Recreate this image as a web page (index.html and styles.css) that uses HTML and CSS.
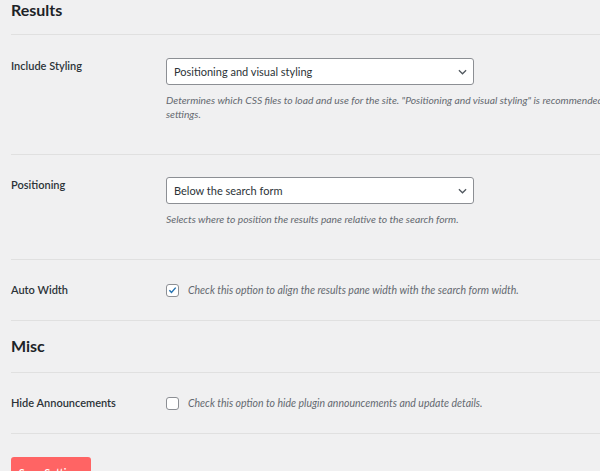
FILE: index.html
```html
<!DOCTYPE html>
<html lang="en">
<head>
<meta charset="utf-8">
<title>Settings</title>
<link rel="stylesheet" href="styles.css">
</head>
<body>
<div class="page">
  <h2 class="section-head first">Results</h2>

  <div class="row">
    <div class="label">Include Styling</div>
    <div class="field">
      <div class="select"><span>Positioning and visual styling</span>
        <svg class="chev" viewBox="0 0 10 6" width="9" height="6"><path d="M1 1l4 4 4-4" fill="none" stroke="#50575e" stroke-width="1.4"/></svg>
      </div>
      <p class="desc wide">Determines which CSS files to load and use for the site. "Positioning and visual styling" is recommended for most settings.</p>
    </div>
  </div>

  <div class="row">
    <div class="label">Positioning</div>
    <div class="field">
      <div class="select"><span>Below the search form</span>
        <svg class="chev" viewBox="0 0 10 6" width="9" height="6"><path d="M1 1l4 4 4-4" fill="none" stroke="#50575e" stroke-width="1.4"/></svg>
      </div>
      <p class="desc">Selects where to position the results pane relative to the search form.</p>
    </div>
  </div>

  <div class="row check-row">
    <div class="label">Auto Width</div>
    <div class="field inline">
      <span class="checkbox checked"><svg viewBox="0 0 12 12" width="12" height="12"><path d="M2.6 6.2l2.3 2.4 4.6-5.2" fill="none" stroke="#2271b1" stroke-width="1.6"/></svg></span>
      <span class="desc">Check this option to align the results pane width with the search form width.</span>
    </div>
  </div>

  <h2 class="section-head">Misc</h2>

  <div class="row check-row">
    <div class="label">Hide Announcements</div>
    <div class="field inline">
      <span class="checkbox"></span>
      <span class="desc">Check this option to hide plugin announcements and update details.</span>
    </div>
  </div>

  <div class="actions">
    <button class="save" type="button">Save Settings</button>
  </div>
</div>
</body>
</html>
```

FILE: styles.css
```css
html, body {
  margin: 0;
  padding: 0;
  background: #f0f0f1;
  overflow: hidden;
}

body {
  font-family: Lato, "Open Sans", sans-serif;
  color: #1d2327;
}

.page {
  padding-left: 11px;
  width: 720px;
}

.section-head {
  margin: 0;
  font-size: 16px;
  font-weight: 700;
  line-height: 20px;
  padding: 15px 0 16px;
  border-bottom: 1px solid #e0e0e0;
  color: #1d2327;
}

.section-head.first {
  padding: 0 0 14px;
  margin-bottom: 1px;
}

.row {
  display: flex;
  padding: 23px 0 33px;
  border-bottom: 1px solid #e0e0e0;
}

.check-row {
  padding: 23px 0 23px;
}

.label {
  width: 155px;
  flex: none;
  font-size: 11px;
  font-weight: 600;
  line-height: 14px;
  color: #2c3338;
}

.field {
  flex: 1;
  min-width: 0;
}

.field.inline {
  display: flex;
  align-items: center;
  gap: 9px;
  height: 14px;
  white-space: nowrap;
}

.select {
  box-sizing: border-box;
  width: 308px;
  height: 27px;
  margin-top: -1px;
  border: 1px solid #8c8f94;
  border-radius: 3px;
  background: #fff;
  display: flex;
  align-items: center;
  justify-content: space-between;
  padding: 0 6px 0 7px;
  font-size: 11px;
  color: #2c3338;
}

.chev {
  display: block;
}

.desc {
  margin: 8px 0 0;
  font-size: 10.3px;
  line-height: 14px;
  font-style: italic;
  color: #646970;
  width: 440px;
}

.desc.wide {
  width: 500px;
}

.inline .desc {
  margin: 0;
  width: auto;
  font-size: 10.5px;
}

.checkbox {
  flex: none;
  box-sizing: border-box;
  width: 13px;
  height: 13px;
  border: 1px solid #8c8f94;
  border-radius: 3px;
  background: #fff;
  display: flex;
  align-items: center;
  justify-content: center;
}

.checkbox svg {
  display: block;
}

.actions {
  padding-top: 23px;
}

.save {
  display: block;
  width: 80px;
  height: 30px;
  border: 0;
  border-radius: 3px;
  background: #ff6464;
  color: #fff;
  font-family: Lato, "Open Sans", sans-serif;
  font-size: 11px;
  font-weight: 600;
  padding: 0;
}
```
